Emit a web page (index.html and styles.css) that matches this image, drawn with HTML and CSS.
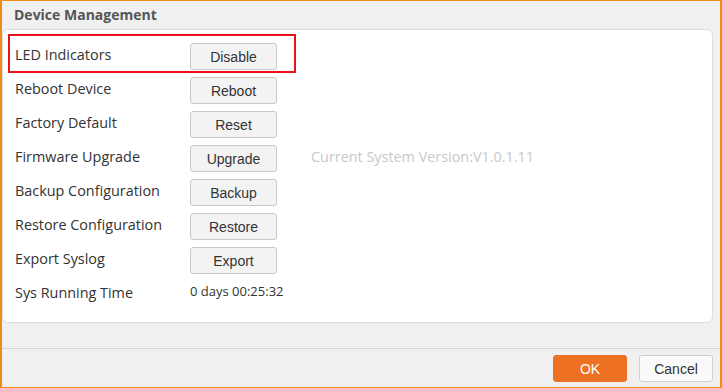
FILE: index.html
```html
<!DOCTYPE html>
<html lang="en">

<head>
    <meta charset="UTF-8">
    <meta name="viewport" content="width=device-width, initial-scale=1.0">
    <title>Device Management</title>
    <link rel="stylesheet" href="styles.css">
</head>

<body>
    <div id="dialog">
        <h1>Device Management</h1>

        <div class="card">
            <div class="row highlight">
                <span class="label">LED Indicators</span>
                <button class="btn">Disable</button>
            </div>
            <div class="row">
                <span class="label">Reboot Device</span>
                <button class="btn">Reboot</button>
            </div>
            <div class="row">
                <span class="label">Factory Default</span>
                <button class="btn">Reset</button>
            </div>
            <div class="row">
                <span class="label">Firmware Upgrade</span>
                <button class="btn">Upgrade</button>
                <span class="version">Current System Version:V1.0.1.11</span>
            </div>
            <div class="row">
                <span class="label">Backup Configuration</span>
                <button class="btn">Backup</button>
            </div>
            <div class="row">
                <span class="label">Restore Configuration</span>
                <button class="btn">Restore</button>
            </div>
            <div class="row">
                <span class="label">Export Syslog</span>
                <button class="btn">Export</button>
            </div>
            <div class="row">
                <span class="label">Sys Running Time</span>
                <span class="uptime">0 days 00:25:32</span>
            </div>
        </div>

        <div class="footer">
            <button class="btn-ok">OK</button>
            <button class="btn-cancel">Cancel</button>
        </div>
    </div>
</body>

</html>
```

FILE: styles.css
```css
html,
body {
    margin: 0;
    background: #f0f0f0;
    font-family: "Open Sans", "Noto Sans", sans-serif;
}

#dialog {
    width: 722px;
    height: 388px;
    box-sizing: border-box;
    border-style: solid;
    border-color: #f28a1a;
    border-width: 1px 2px 1px 2px;
    background: #f0f0f0;
    display: flex;
    flex-direction: column;
}

h1 {
    margin: 0;
    height: 28px;
    padding-left: 12px;
    font-size: 14px;
    font-weight: bold;
    line-height: 27px;
    color: #555;
}

.card {
    background: white;
    border: 1px solid #dcdcdc;
    border-radius: 6px;
    margin-right: 7px;
    height: 294px;
    box-sizing: border-box;
    padding: 10px 12px 0 12px;
}

.row {
    position: relative;
    display: flex;
    align-items: flex-start;
    height: 34px;
}

.highlight::after {
    content: "";
    position: absolute;
    top: -6px;
    left: -7px;
    width: 288px;
    height: 39px;
    box-sizing: border-box;
    border: 2px solid #e8121a;
}

.label {
    width: 175px;
    padding-top: 5px;
    font-size: 14.4px;
    line-height: 20px;
    color: #333;
}

.btn {
    margin-top: 3px;
    width: 87px;
    height: 27px;
    padding: 0;
    background: #f3f3f3;
    border: 1px solid #c9c9c9;
    border-radius: 3px;
    font-family: "Liberation Sans", Arial, sans-serif;
    font-size: 14px;
    color: #333;
}

.version {
    margin-left: 34px;
    padding-top: 5px;
    font-size: 14.4px;
    line-height: 20px;
    color: #c8c8c8;
}

.uptime {
    padding-top: 4px;
    font-size: 13px;
    line-height: 18px;
    color: #333;
}

.footer {
    margin-top: auto;
    height: 39px;
    box-sizing: border-box;
    border-top: 1px solid #d4d4d4;
    display: flex;
    justify-content: flex-end;
    align-items: flex-start;
    gap: 12px;
    padding: 6px 7px 0 0;
}

.btn-ok,
.btn-cancel {
    width: 74px;
    height: 27px;
    border-radius: 3px;
    font-family: "Liberation Sans", Arial, sans-serif;
    font-size: 14px;
    padding: 0;
}

.btn-ok {
    background: #ee7023;
    border: 1px solid #ee7023;
    color: white;
}

.btn-cancel {
    background: #fafafa;
    border: 1px solid #cfcfcf;
    color: #333;
}
```
